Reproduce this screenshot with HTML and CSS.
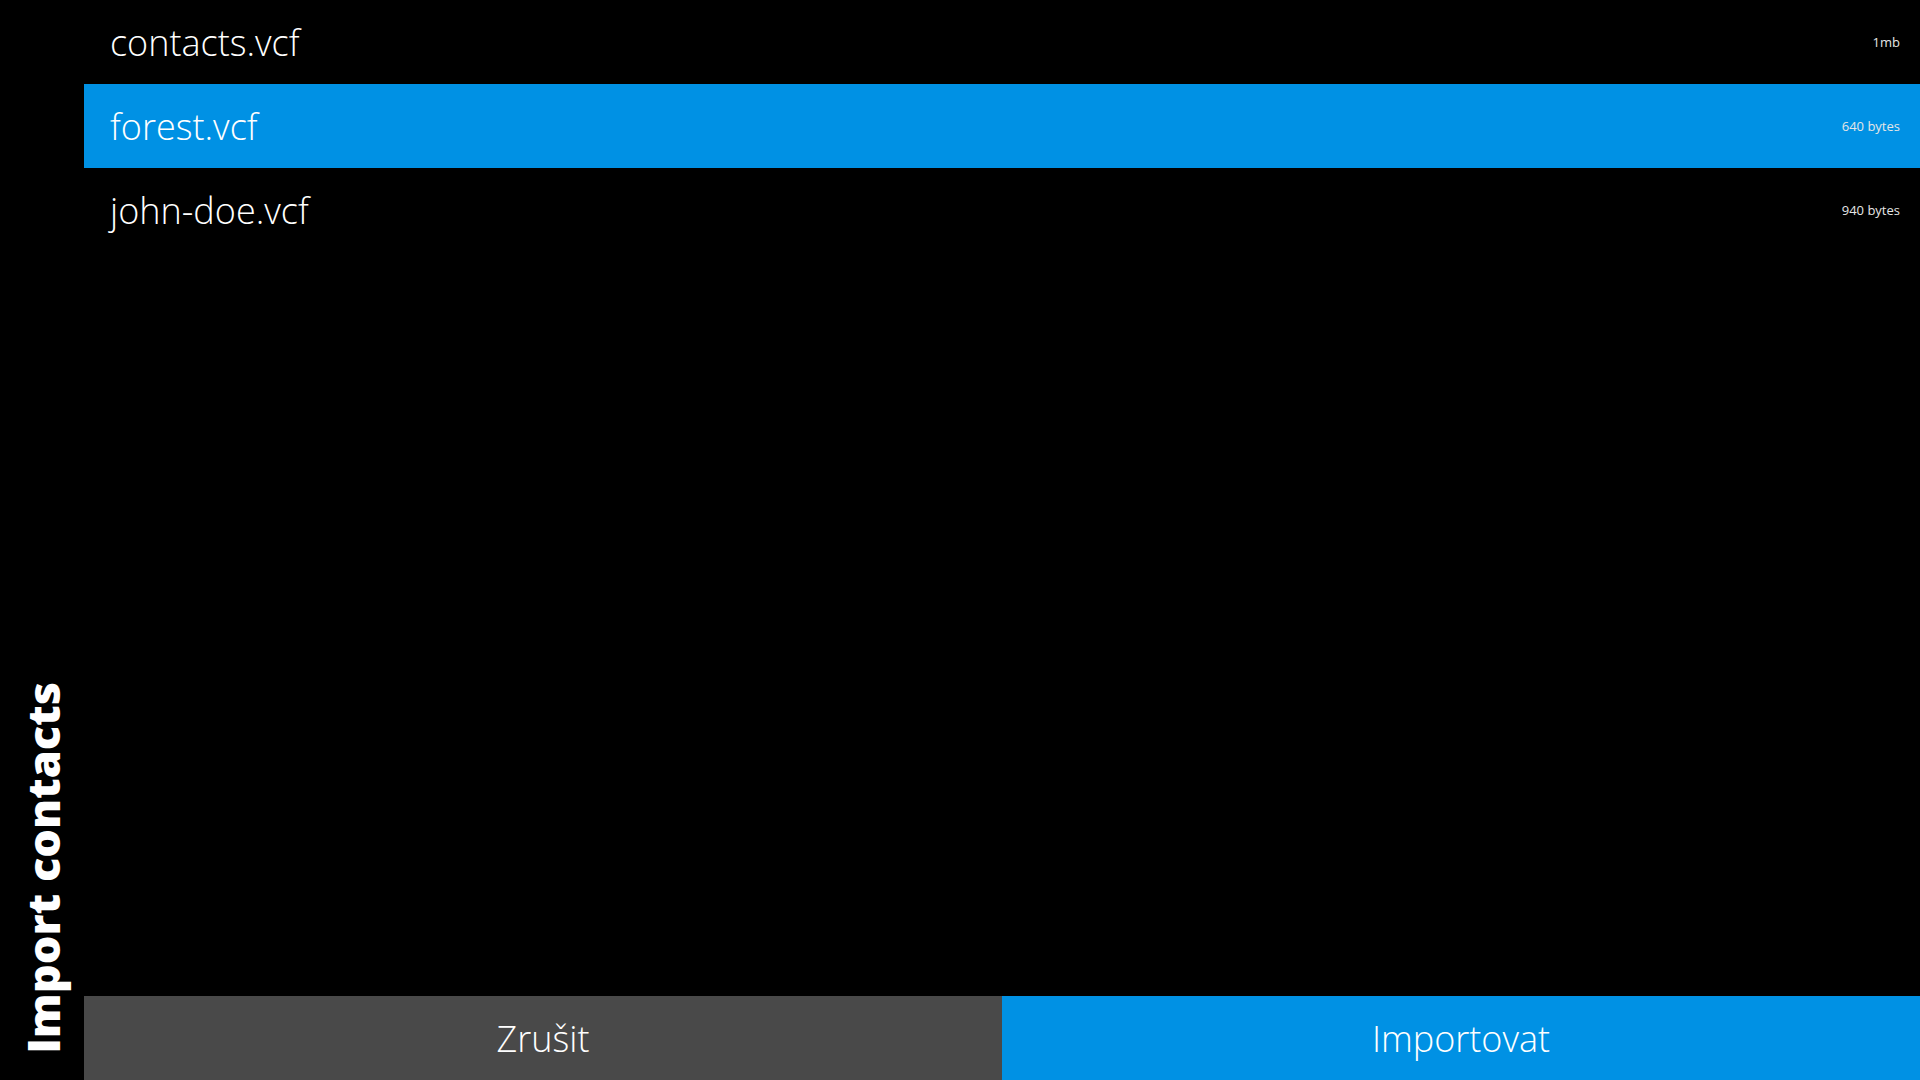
FILE: index.html
```html
<!DOCTYPE html>
<html lang="cs">
<head>
<meta charset="utf-8">
<title>Import contacts</title>
<link rel="stylesheet" href="styles.css">
</head>
<body>
<div class="app">
  <aside class="sidebar">
    <h1 class="title">Import contacts</h1>
  </aside>
  <main class="main">
    <ul class="files">
      <li class="file"><span class="name">contacts.vcf</span><span class="size">1mb</span></li>
      <li class="file selected"><span class="name">forest.vcf</span><span class="size">640 bytes</span></li>
      <li class="file"><span class="name">john-doe.vcf</span><span class="size">940 bytes</span></li>
    </ul>
    <div class="actions">
      <button class="btn cancel">Zrušit</button>
      <button class="btn primary">Importovat</button>
    </div>
  </main>
</div>
</body>
</html>
```

FILE: styles.css
```css
* { box-sizing: border-box; }
html, body { margin: 0; padding: 0; height: 100%; }
body {
  background: #000;
  color: #fff;
  font-family: "Open Sans", "Noto Sans", sans-serif;
}
.app {
  display: flex;
  height: 1080px;
  width: 1920px;
}
.sidebar {
  width: 84px;
  flex: none;
  display: flex;
  flex-direction: column;
  justify-content: flex-end;
  align-items: center;
  padding-bottom: 26px;
}
.title {
  margin: 0;
  writing-mode: vertical-rl;
  transform: rotate(180deg);
  font-size: 45px;
  font-weight: 800;
  line-height: 1;
  white-space: nowrap;
}
.main {
  flex: 1;
  display: flex;
  flex-direction: column;
  min-width: 0;
}
.files {
  list-style: none;
  margin: 0;
  padding: 0;
  flex: 1;
}
.file {
  height: 84px;
  display: flex;
  align-items: center;
  justify-content: space-between;
  padding: 0 20px 0 26px;
}
.file.selected { background: #0091e4; }
.name {
  font-size: 36px;
  font-weight: 300;
}
.size {
  font-size: 13px;
  color: #e6e6e6;
}
.actions {
  display: flex;
  height: 84px;
}
.btn {
  flex: 1;
  border: 0;
  margin: 0;
  color: #fff;
  font-family: inherit;
  font-size: 36px;
  font-weight: 300;
}
.btn.cancel { background: #494949; }
.btn.primary { background: #0091e4; }
```
